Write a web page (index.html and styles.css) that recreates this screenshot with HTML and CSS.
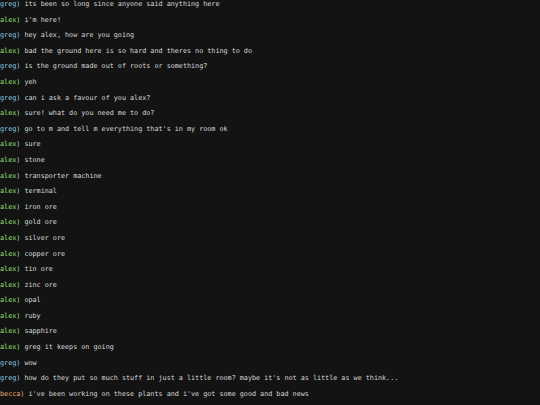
FILE: index.html
```html
<!DOCTYPE html>
<html>
<head>
<meta charset="utf-8">
<link rel="stylesheet" href="styles.css">
</head>
<body>
<div class="log">
<p class="line"><span class="greg">greg)</span> its been so long since anyone said anything here</p>
<p class="line"><span class="alex">alex)</span> i'm here!</p>
<p class="line"><span class="greg">greg)</span> hey alex, how are you going</p>
<p class="line"><span class="alex">alex)</span> bad the ground here is so hard and theres no thing to do</p>
<p class="line"><span class="greg">greg)</span> is the ground made out of roots or something?</p>
<p class="line"><span class="alex">alex)</span> yeh</p>
<p class="line"><span class="greg">greg)</span> can i ask a favour of you alex?</p>
<p class="line"><span class="alex">alex)</span> sure! what do you need me to do?</p>
<p class="line"><span class="greg">greg)</span> go to m and tell m everything that's in my room ok</p>
<p class="line"><span class="alex">alex)</span> sure</p>
<p class="line"><span class="alex">alex)</span> stone</p>
<p class="line"><span class="alex">alex)</span> transporter machine</p>
<p class="line"><span class="alex">alex)</span> terminal</p>
<p class="line"><span class="alex">alex)</span> iron ore</p>
<p class="line"><span class="alex">alex)</span> gold ore</p>
<p class="line"><span class="alex">alex)</span> silver ore</p>
<p class="line"><span class="alex">alex)</span> copper ore</p>
<p class="line"><span class="alex">alex)</span> tin ore</p>
<p class="line"><span class="alex">alex)</span> zinc ore</p>
<p class="line"><span class="alex">alex)</span> opal</p>
<p class="line"><span class="alex">alex)</span> ruby</p>
<p class="line"><span class="alex">alex)</span> sapphire</p>
<p class="line"><span class="alex">alex)</span> greg it keeps on going</p>
<p class="line"><span class="greg">greg)</span> wow</p>
<p class="line"><span class="greg">greg)</span> how do they put so much stuff in just a little room? maybe it's not as little as we think...</p>
<p class="line"><span class="becca">becca)</span> i've been working on these plants and i've got some good and bad news</p>
</div>
</body>
</html>
```
FILE: styles.css
```css
html, body {
  margin: 0;
  padding: 0;
  background: #131313;
  height: 100%;
  overflow: hidden;
}
.log {
  padding: 0;
  font-family: "DejaVu Sans Mono", monospace;
  font-size: 6.75px;
  color: #d8d8d8;
}
.line {
  margin: 0 0 7.6px 0;
  height: 8px;
  line-height: 8px;
  white-space: pre;
}
.greg { color: #8cc8e8; }
.alex { color: #9be07a; }
.becca { color: #f0b070; }
```
